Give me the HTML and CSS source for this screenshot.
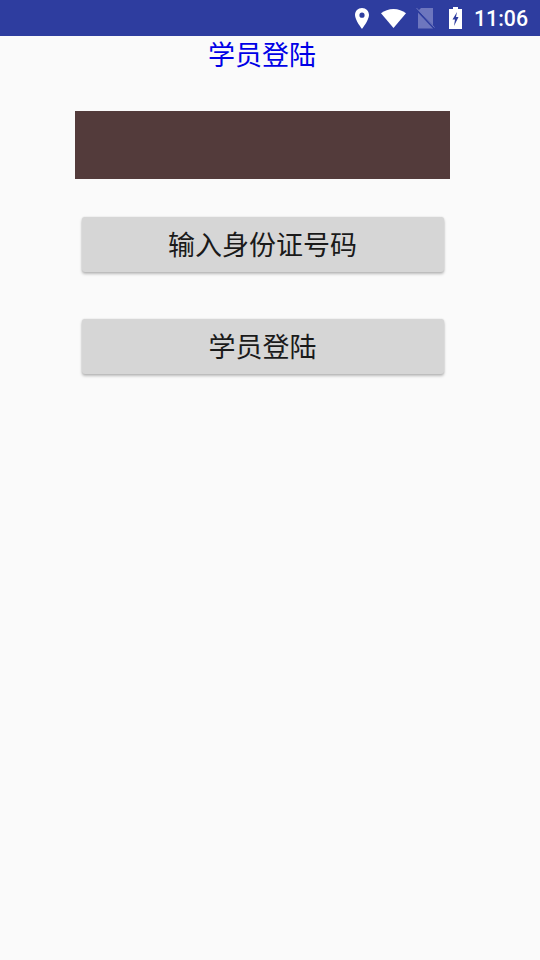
FILE: index.html
```html
<!DOCTYPE html>
<html lang="zh-CN">
<head>
  <meta charset="UTF-8" />
  <meta name="viewport" content="width=device-width, initial-scale=1.0"/>
  <title>学员登陆</title>
  <link rel="stylesheet" href="styles.css">
</head>
<body>
  <div class="status-bar">
    <svg class="icon-pin" width="14" height="21" viewBox="0 0 14 21">
      <path fill-rule="evenodd" fill="#fff" d="M7 0C3 0 0 3.100 0 7.100 0 12.300 7 21 7 21s7-8.700 7-13.900C14 3.100 11 0 7 0zM7 9.800a2.600 2.600 0 1 1 0-5.200 2.600 2.600 0 0 1 0 5.200z"/>
    </svg>
    <svg class="icon-wifi" width="25" height="19" viewBox="0 0 25 19">
      <path fill="#fff" d="M12.500 19L0 4.300C3.400 1.600 7.700 0 12.500 0S21.600 1.600 25 4.300z"/>
    </svg>
    <svg class="icon-sim" width="19" height="21" viewBox="0 0 19 21">
      <path fill="#6d76be" d="M5 0H17V20.500H2V3z"/>
      <path stroke="#2e3d9f" stroke-width="2" d="M0 1L18 20"/>
      <path stroke="#6d76be" stroke-width="1" d="M0.500 0L18.500 19.500"/>
    </svg>
    <svg class="icon-battery" width="13" height="22" viewBox="0 0 13 22">
      <path fill="#fff" d="M4 0h5v2H13v20H0V2h4z"/>
      <path fill="#2e3d9f" d="M8 5L3.500 12.500H6L5 19 9.500 10H7z"/>
    </svg>
    <span class="clock">11:06</span>
  </div>

  <div class="container">
    <h1 class="title">学员登陆</h1>
    <div class="id-box"></div>
    <button class="action-btn btn-id">输入身份证号码</button>
    <button class="action-btn btn-login">学员登陆</button>
  </div>
</body>
</html>
```

FILE: styles.css
```css
body {
  margin: 0;
  height: 960px;
  overflow: hidden;
  background: #fafafa;
  font-family: "Noto Sans CJK SC", "Roboto", sans-serif;
}

.status-bar {
  height: 36px;
  background: #2e3d9f;
  display: flex;
  align-items: center;
  justify-content: flex-end;
  padding-right: 12px;
}

.icon-pin {
  margin-right: 12px;
}

.icon-wifi {
  margin-right: 10px;
}

.icon-sim {
  margin-right: 14px;
}

.icon-battery {
  margin-right: 12px;
}

.clock {
  font-family: "Roboto", sans-serif;
  font-size: 21.3px;
  color: #fff;
  font-weight: 500;
}

.container {
  width: 525px;
  display: flex;
  flex-direction: column;
  align-items: center;
}

.title {
  margin: 0 1px 0 0;
  height: 38px;
  line-height: 35px;
  font-size: 27px;
  font-weight: normal;
  color: #0000e6;
}

.id-box {
  width: 375px;
  height: 68px;
  margin-top: 37px;
  background: #533b3b;
}

.action-btn {
  width: 362px;
  height: 55px;
  padding: 0 0 3px 0;
  border: none;
  border-radius: 3px;
  background: #d6d6d6;
  color: #1a1a1a;
  font-family: inherit;
  font-size: 27px;
  box-shadow: 0 2px 3px rgba(0, 0, 0, 0.26), 0 0 2px rgba(0, 0, 0, 0.12);
}

.btn-id {
  margin-top: 38px;
}

.btn-login {
  margin-top: 47px;
}
```
